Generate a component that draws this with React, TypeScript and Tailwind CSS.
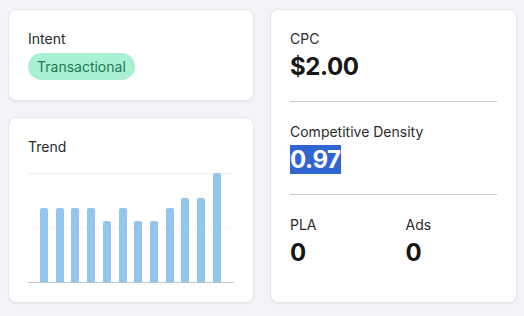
const bars = [74, 74, 74, 74, 61, 74, 61, 61, 74, 84, 84, 109];

const Card = ({ children, className = "" }: { children: React.ReactNode; className?: string }) => (
  <div
    className={`bg-white rounded-lg border border-[#e6e8ee] shadow-[0_1px_2px_rgba(0,0,0,0.06)] p-[19px] ${className}`}
  >
    {children}
  </div>
);

const Label = ({ children }: { children: React.ReactNode }) => (
  <div className="text-sm leading-5 text-[#2a2a2a]">{children}</div>
);

const Value = ({ children }: { children: React.ReactNode }) => (
  <div className="mt-[3px] text-2xl leading-[29px] font-bold tracking-[-0.4px] text-[#161616]">{children}</div>
);

export default function App() {
  return (
    <div
      className="w-[524px] h-[316px] bg-[#f3f4f8] pl-[8px] pr-[7px] pt-[9px] pb-[13px] grid grid-cols-[246px_247px] gap-4"
      style={{ fontFamily: "Inter, 'Noto Sans', sans-serif" }}
    >
      {/* LEFT */}
      <div className="flex flex-col gap-4">
        <Card className="h-[92px]">
          <Label>Intent</Label>
          <span className="mt-1 inline-flex items-center h-[27px] px-[9px] rounded-full bg-[#aaf0d2] text-sm text-[#1d7a52]">
            Transactional
          </span>
        </Card>

        <Card className="flex-1 flex flex-col">
          <Label>Trend</Label>
          <div className="mt-4 relative h-[110px] border-t border-[#eeeeee]">
            <div className="absolute left-0 right-0 top-[54px] border-t border-[#f6f6f6]" />
            <div className="relative h-[109px] flex items-end justify-between pl-[12px] pr-[13px] border-b border-[#c4c4c6]">
              {bars.map((h, i) => (
                <div
                  key={i}
                  className="w-2 rounded-t-[2px] bg-[#93c6ec]"
                  style={{ height: h }}
                />
              ))}
            </div>
          </div>
        </Card>
      </div>

      {/* RIGHT */}
      <Card>
        <Label>CPC</Label>
        <Value>$2.00</Value>

        <div className="my-5 border-t border-[#cbcbce]" />

        <Label>Competitive Density</Label>
        <Value>
          <span className="bg-[#3166d2] text-white">0.97</span>
        </Value>

        <div className="my-5 border-t border-[#cbcbce]" />

        <div className="grid grid-cols-2 gap-x-6">
          <div>
            <Label>PLA</Label>
            <Value>0</Value>
          </div>
          <div>
            <Label>Ads</Label>
            <Value>0</Value>
          </div>
        </div>
      </Card>
    </div>
  );
}
